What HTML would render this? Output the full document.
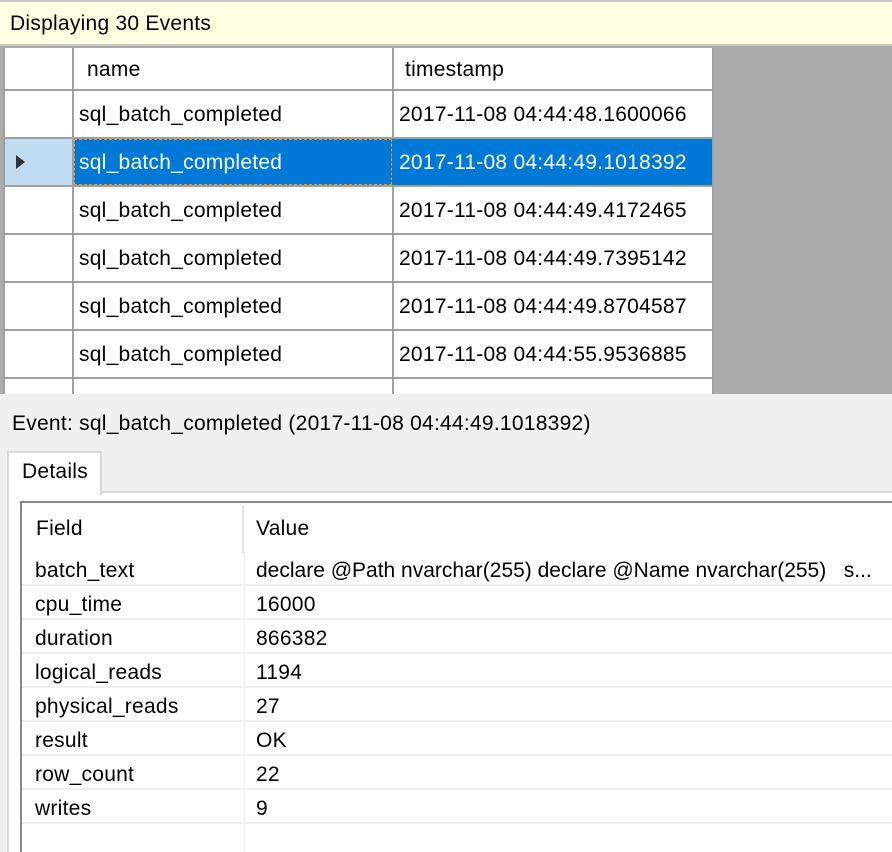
<!DOCTYPE html>
<html><head><style>
*{margin:0;padding:0;box-sizing:border-box}
body{width:892px;height:852px;overflow:hidden;background:#f0f0f0;font-family:"Liberation Sans",sans-serif;font-size:21px;letter-spacing:0.25px;color:#000;position:relative}
.a{position:absolute}
.t{position:absolute;white-space:nowrap;line-height:24px}
</style></head><body>
<div class="a" style="left:0;top:0;width:892px;height:46px;background:#ffffe1;border-top:2px solid #c8c8c8;border-bottom:2px solid #c8c8c8"></div>
<div class="t" style="left:10px;top:12px">Displaying 30 Events</div>
<div class="a" style="left:0;top:46px;width:892px;height:348px;background:#ababab"></div>
<div class="a" style="left:3px;top:48px;width:710px;height:346px;background:#fff;border-left:2px solid #a0a0a0"></div>
<div class="a" style="left:72px;top:48px;width:2px;height:346px;background:#a0a0a0"></div>
<div class="a" style="left:392px;top:48px;width:2px;height:346px;background:#a0a0a0"></div>
<div class="a" style="left:712px;top:48px;width:2px;height:346px;background:#a0a0a0"></div>
<div class="a" style="left:5px;top:89px;width:708px;height:2px;background:#a0a0a0"></div>
<div class="a" style="left:5px;top:137px;width:708px;height:2px;background:#a0a0a0"></div>
<div class="a" style="left:5px;top:185px;width:708px;height:2px;background:#a0a0a0"></div>
<div class="a" style="left:5px;top:233px;width:708px;height:2px;background:#a0a0a0"></div>
<div class="a" style="left:5px;top:281px;width:708px;height:2px;background:#a0a0a0"></div>
<div class="a" style="left:5px;top:329px;width:708px;height:2px;background:#a0a0a0"></div>
<div class="a" style="left:5px;top:377px;width:708px;height:2px;background:#a0a0a0"></div>
<div class="a" style="left:5px;top:139px;width:67px;height:46px;background:#bfdcf2"></div>
<div class="a" style="left:16px;top:155px;width:0;height:0;border-top:7px solid transparent;border-bottom:7px solid transparent;border-left:9px solid #333"></div>
<div class="a" style="left:74px;top:139px;width:638px;height:46px;background:#0078d7"></div>
<div class="a" style="left:74px;top:139px;width:318px;height:46px;border:1px dashed #f90"></div>
<div class="t" style="left:87px;top:58px">name</div>
<div class="t" style="left:405px;top:58px">timestamp</div>
<div class="t" style="left:79px;top:103px">sql_batch_completed</div>
<div class="t" style="left:399px;top:103px">2017-11-08 04:44:48.1600066</div>
<div class="t" style="left:79px;top:151px;color:#fff">sql_batch_completed</div>
<div class="t" style="left:399px;top:151px;color:#fff">2017-11-08 04:44:49.1018392</div>
<div class="t" style="left:79px;top:199px">sql_batch_completed</div>
<div class="t" style="left:399px;top:199px">2017-11-08 04:44:49.4172465</div>
<div class="t" style="left:79px;top:247px">sql_batch_completed</div>
<div class="t" style="left:399px;top:247px">2017-11-08 04:44:49.7395142</div>
<div class="t" style="left:79px;top:295px">sql_batch_completed</div>
<div class="t" style="left:399px;top:295px">2017-11-08 04:44:49.8704587</div>
<div class="t" style="left:79px;top:343px">sql_batch_completed</div>
<div class="t" style="left:399px;top:343px">2017-11-08 04:44:55.9536885</div>
<div class="t" style="left:12px;top:412px">Event: sql_batch_completed (2017-11-08 04:44:49.1018392)</div>
<div class="a" style="left:7px;top:491px;width:885px;height:361px;background:#fff;border-left:2px solid #d9d9d9;border-top:2px solid #d9d9d9"></div>
<div class="a" style="left:7px;top:451px;width:95px;height:44px;background:#fff;border:2px solid #d9d9d9;border-bottom:none"></div>
<div class="t" style="left:22px;top:460px">Details</div>
<div class="a" style="left:20px;top:501px;width:872px;height:351px;background:#fff;border-left:2px solid #828790;border-top:2px solid #828790"></div>
<div class="a" style="left:242px;top:505px;width:2px;height:48px;background:#e5e5e5"></div>
<div class="a" style="left:244px;top:553px;width:1px;height:299px;background:#f0f0f0"></div>
<div class="t" style="left:36px;top:517px">Field</div>
<div class="t" style="left:256px;top:517px">Value</div>
<div class="a" style="left:22px;top:584px;width:870px;height:2px;background:#f0f0f0"></div>
<div class="a" style="left:22px;top:618px;width:870px;height:2px;background:#f0f0f0"></div>
<div class="a" style="left:22px;top:652px;width:870px;height:2px;background:#f0f0f0"></div>
<div class="a" style="left:22px;top:686px;width:870px;height:2px;background:#f0f0f0"></div>
<div class="a" style="left:22px;top:720px;width:870px;height:2px;background:#f0f0f0"></div>
<div class="a" style="left:22px;top:754px;width:870px;height:2px;background:#f0f0f0"></div>
<div class="a" style="left:22px;top:788px;width:870px;height:2px;background:#f0f0f0"></div>
<div class="a" style="left:22px;top:822px;width:870px;height:2px;background:#f0f0f0"></div>
<div class="t" style="left:35px;top:559px">batch_text</div><div class="t" style="left:256px;top:559px;letter-spacing:0">declare @Path nvarchar(255) declare @Name nvarchar(255) &nbsp; s...</div>
<div class="t" style="left:35px;top:593px">cpu_time</div><div class="t" style="left:256px;top:593px">16000</div>
<div class="t" style="left:35px;top:627px">duration</div><div class="t" style="left:256px;top:627px">866382</div>
<div class="t" style="left:35px;top:661px">logical_reads</div><div class="t" style="left:256px;top:661px">1194</div>
<div class="t" style="left:35px;top:695px">physical_reads</div><div class="t" style="left:256px;top:695px">27</div>
<div class="t" style="left:35px;top:729px">result</div><div class="t" style="left:256px;top:729px">OK</div>
<div class="t" style="left:35px;top:763px">row_count</div><div class="t" style="left:256px;top:763px">22</div>
<div class="t" style="left:35px;top:797px">writes</div><div class="t" style="left:256px;top:797px">9</div>
</body></html>
